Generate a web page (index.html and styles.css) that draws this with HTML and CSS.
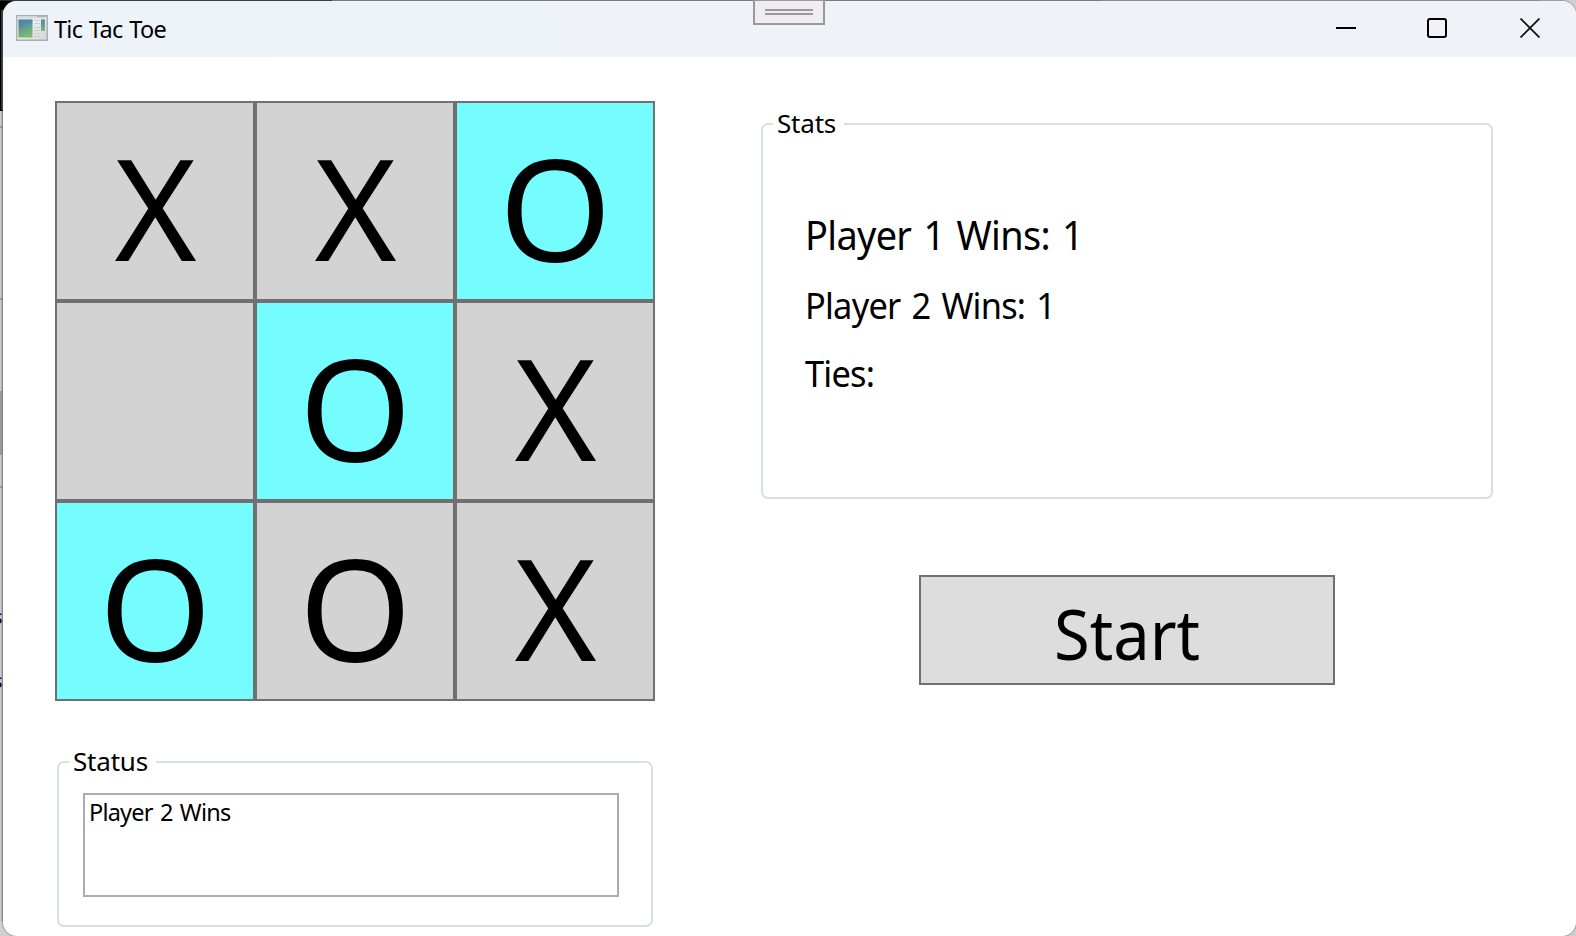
FILE: index.html
```html
<!DOCTYPE html>
<html lang="en">
<head>
<meta charset="utf-8">
<title>Tic Tac Toe</title>
<link rel="stylesheet" href="styles.css">
</head>
<body>
<div class="desktop">
  <span class="behind behind-a">s</span>
  <span class="behind behind-b">s</span>
  <main class="window">
    <header class="titlebar">
      <svg class="app-icon" width="32" height="26" viewBox="0 0 32 26">
        <defs>
          <linearGradient id="pane" x1="0" y1="0" x2="0.3" y2="1"><stop offset="0" stop-color="#4f83a8"/><stop offset="0.5" stop-color="#5c9c93"/><stop offset="1" stop-color="#7cb874"/></linearGradient>
          <linearGradient id="frame" x1="0" y1="0" x2="1" y2="1"><stop offset="0" stop-color="#ffffff"/><stop offset="1" stop-color="#d5d5d5"/></linearGradient>
        </defs>
        <rect x="0.75" y="0.75" width="30.5" height="24.5" fill="url(#frame)" stroke="#a9b1b7" stroke-width="1.500"/>
        <path d="M1.500 2.500h29" stroke="#d3d9dc" stroke-width="2"/>
        <path d="M21 1.500h9" stroke="#a9b5b0"/>
        <rect x="2.500" y="4.500" width="14" height="18" fill="url(#pane)"/>
        <path d="M2.500 13Q8 8 16.500 8V4.500h-14z" fill="#4f7fae" opacity=".45"/>
        <path d="M18 5.500h6M18 8.500h6M18 12.500h6M18 15.500h6M18 18.500h6M18 21.500h6" stroke="#c9cdcf"/>
        <rect x="25" y="4.500" width="4" height="11.500" fill="url(#pane)"/>
        <path d="M25 18.500h4" stroke="#d4d4d4"/>
      </svg>
      <h1 class="title">Tic Tac Toe</h1>
      <div class="controls">
        <svg width="20" height="20" viewBox="0 0 20 20"><path d="M0 10h20" stroke="#000" stroke-width="2"/></svg>
        <svg width="20" height="20" viewBox="0 0 20 20"><rect x="1" y="1" width="18" height="18" rx="2" fill="none" stroke="#000" stroke-width="2"/></svg>
        <svg width="20" height="20" viewBox="0 0 20 20"><path d="M.5.5l19 19M19.500.5l-19 19" stroke="#111" stroke-width="1.800"/></svg>
      </div>
    </header>
    <div class="content">
      <section class="left">
        <div class="board">
          <button class="cell"><span class="x">X</span></button><button class="cell"><span class="x">X</span></button><button class="cell win"><span class="o">O</span></button>
          <button class="cell"></button><button class="cell win"><span class="o">O</span></button><button class="cell"><span class="x">X</span></button>
          <button class="cell win"><span class="o">O</span></button><button class="cell"><span class="o">O</span></button><button class="cell"><span class="x">X</span></button>
        </div>
        <div class="group status">
          <div class="legend"><span>Status</span></div>
          <div class="textbox"><span class="message">Player 2 Wins</span></div>
        </div>
      </section>
      <section class="right">
        <div class="group stats">
          <div class="legend legend-short"><span>Stats</span></div>
          <div class="rows">
            <div class="row row-large">Player 1 Wins: 1</div>
            <div class="row">Player 2 Wins: 1</div>
            <div class="row">Ties:</div>
          </div>
        </div>
        <button class="start"><span>Start</span></button>
      </section>
    </div>
  </main>
  <div class="handle"><i></i><i></i></div>
</div>
</body>
</html>
```
FILE: styles.css
```css
* { box-sizing: border-box; }
body { margin: 0; font-family: "Noto Sans", "Open Sans", sans-serif; color: #000; }
button { font: inherit; color: inherit; margin: 0; padding: 0; border-radius: 0; }

.desktop {
  position: relative;
  width: 1576px;
  height: 936px;
  padding: 1px 0 0 3px;
  overflow: hidden;
  background:
    linear-gradient(#343434, #343434) 1px 10px / 2px 100px no-repeat,
    linear-gradient(90deg, #2c2c2e 332px, #929198 332px, #929198 1100px, #aaa9af 1100px) 0 0 / 1540px 1px no-repeat,
    linear-gradient(#000, #000) 0 0 / 20px 111px no-repeat,
    linear-gradient(#999, #999) 0 126px / 3px 2px no-repeat,
    linear-gradient(#999, #999) 0 298px / 3px 2px no-repeat,
    linear-gradient(#9a9a9a, #9a9a9a) 0 391px / 3px 64px no-repeat,
    linear-gradient(#999, #999) 0 486px / 3px 2px no-repeat,
    linear-gradient(#acacac, #acacac) 1px 111px / 2px 810px no-repeat,
    #cfcfcf;
}
.behind { position: absolute; left: -7px; font-size: 20px; line-height: 20px; color: #111; }
.behind-a { top: 607px; }
.behind-b { top: 671px; }

.window {
  position: relative;
  width: 1573px;
  height: 935px;
  border-radius: 14px;
  overflow: hidden;
  background: #fff;
  box-shadow: 0 0 0 1px rgba(90, 90, 90, .4);
}

.titlebar { display: flex; align-items: flex-start; height: 56px; padding-left: 13px; background: linear-gradient(90deg, #edf3f8, #eff3f8 50%); }
.app-icon { margin-top: 14px; }
.title { margin: 0 0 0 6px; font-size: 23.5px; font-weight: 400; line-height: 57px; letter-spacing: -.75px; word-spacing: 1.5px; white-space: nowrap; }
.controls { display: flex; gap: 72px; margin: 17px 36px 0 auto; }
.controls svg + svg { margin-left: -1px; }
.controls svg:last-child { margin-left: 1px; }

.handle {
  position: absolute; left: 753px; top: 0;
  display: flex; flex-direction: column; gap: 2px;
  width: 72px; height: 25px; padding: 9px 10px 0;
  border: 2px solid #999; border-top: 0;
  background: linear-gradient(#999 1px, #efedf1 1px);
}
.handle i { height: 2px; background: #999; }

.content { display: flex; gap: 106px; padding-left: 52px; }
.left { width: 600px; padding-top: 44px; }
.right { display: flex; flex-direction: column; align-items: center; width: 732px; padding-top: 66px; }

.board { display: grid; grid-template-columns: repeat(3, 200px); grid-auto-rows: 200px; }
.cell { display: flex; justify-content: center; padding-top: 5px; border: 2px solid #707070; background: #d3d3d3; font-size: 141.5px; line-height: 196px; }
.cell span { height: 190px; }
.x { padding-left: 1px; transform: scaleX(.99); }
.o { padding-top: 1px; transform: scaleX(1.02); }
.win { background: #75fcff; }

.group { display: flex; flex-direction: column; border: 2px solid #d8dfe3; border-radius: 7px; }
.status { width: 596px; height: 166px; margin: 60px 0 0 2px; }
.stats { width: 732px; height: 376px; }
.legend { width: 87px; height: 36px; margin: -20px 0 0 10px; padding-left: 4px; background: #fff; font-size: 26px; line-height: 36px; letter-spacing: -.2px; }
.legend-short { width: 71px; }
.textbox { width: 536px; height: 104px; margin: 14px 0 0 24px; padding: 1px 4px; border: 2px solid #abadb3; font-size: 23.5px; line-height: 32px; }
.message { letter-spacing: -.8px; word-spacing: 2px; }

.rows { padding: 60px 0 0 42px; }
.row { transform: scaleX(.96); transform-origin: 0 0; font-size: 35.800px; line-height: 68px; letter-spacing: -.8px; word-spacing: 3px; white-space: nowrap; }
.row-large { margin-bottom: 2px; font-size: 39.500px; letter-spacing: -.7px; }

.start { width: 416px; height: 110px; margin-top: 76px; border: 2px solid #707070; background: #ddd; font-size: 70px; }
.start span { display: block; height: 106px; padding-top: 3px; line-height: 106px; transform: scaleX(.93); }
```
